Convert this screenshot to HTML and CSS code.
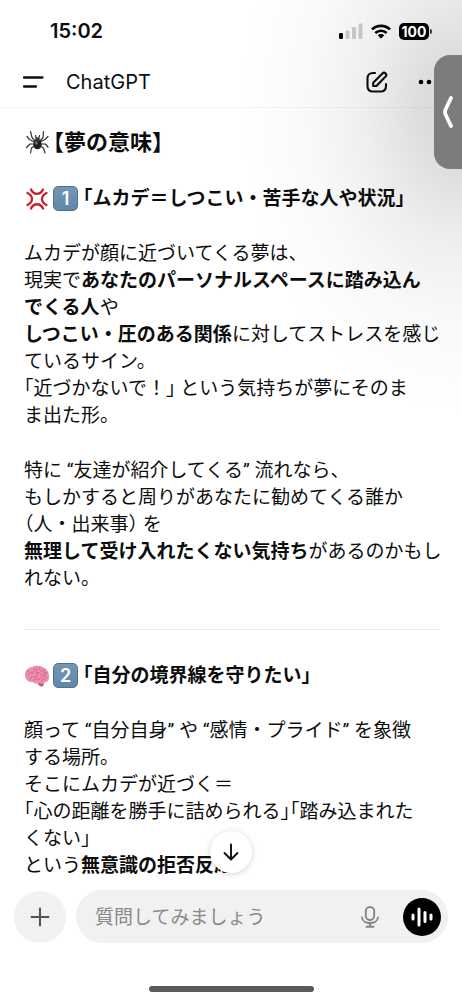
FILE: index.html
```html
<!DOCTYPE html>
<html lang="ja">
<head>
<meta charset="utf-8">
<meta name="viewport" content="width=device-width, initial-scale=1">
<title>ChatGPT</title>
<link rel="stylesheet" href="styles.css">
</head>
<body>
<div class="app">
  <div class="status">
    <time class="clock">15:02</time>
    <div class="indicators">
      <svg class="signal" viewBox="0 0 24 16" aria-hidden="true"><rect x="0" y="10" width="4" height="6" rx="1.2"/><g fill="#c6c6c6"><rect x="6.5" y="7.5" width="4" height="8.500" rx="1.2"/><rect x="13" y="4" width="4" height="12" rx="1.2"/><rect x="19.500" y="0.500" width="4" height="15.500" rx="1.2"/></g></svg>
      <svg class="wifi" viewBox="0 0 20 15" aria-hidden="true"><g fill="none" stroke="#000" stroke-width="2.700"><path d="M1 5.400C6 .6 14 .6 19 5.400"/><path d="M4.300 9C7.600 6 12.400 6 15.700 9"/></g><path d="M6.700 11.300c1.900-1.700 4.700-1.700 6.600 0L10 14.700z"/></svg>
      <div class="battery">100</div>
    </div>
  </div>

  <header class="header">
    <button class="icon-btn" aria-label="メニュー"><svg class="menu-icon" viewBox="0 0 22 14"><path d="M2 2.500h18.500M2 11.500h12" stroke="#0d0d0d" stroke-width="2.300" stroke-linecap="round"/></svg></button>
    <h1 class="title">ChatGPT</h1>
    <button class="icon-btn compose" aria-label="新しいチャット"><svg class="compose-icon" viewBox="0 0 22 22"><g fill="none" stroke="#0d0d0d" stroke-width="2.100" stroke-linecap="round" stroke-linejoin="round"><path d="M9 2H7Q1.500 2 1.500 7.500v7.500Q1.500 20.500 7 20.500h7.500Q20 20.500 20 15v-2"/><path d="M7.200 15v-3.300L16.400 2.400a2.250 2.250 0 0 1 3.200 3.200L10.400 15z"/></g></svg></button>
    <button class="icon-btn" aria-label="その他"><svg class="more-icon" viewBox="0 0 22 6"><circle cx="3" cy="3" r="2.300"/><circle cx="11" cy="3" r="2.300"/><circle cx="19" cy="3" r="2.300"/></svg></button>
  </header>

  <button class="side-tab" aria-label="開く"><svg class="chevron" viewBox="0 0 12 34"><path d="M9 3 3.500 14.500q-1 2.500 0 5L9 31" fill="none" stroke="#fff" stroke-width="3.800" stroke-linecap="round" stroke-linejoin="round"/></svg></button>

  <main class="chat">
    <h2 class="heading-large">
      <svg class="emoji" viewBox="0 0 26 26" role="img" aria-label="クモ"><g fill="none" stroke="#333" stroke-width="1.200" stroke-linecap="round" stroke-linejoin="round"><path d="M11 12 8 8.500 6.500 2.500M10.500 13 5.500 10.500 3 7.500M10.500 15 6 15 2.500 18.500M11 16.500 7.500 19 6.500 24M16 12l3-3.500L19.500 2.500M16 13l5-2.500L24 7.500M16.500 15l5 0 2.500 3M16 17l3.500 2 1.500 5M12.500 10l-1-3.500M14.500 10l1-3.500"/></g><ellipse cx="13.500" cy="15.500" rx="4.200" ry="4.800" fill="#1f1f1f"/><circle cx="13.500" cy="10.500" r="2.300" fill="#333"/><ellipse cx="12.300" cy="14" rx="1.200" ry="1.700" fill="#777"/></svg>
      <span><span class="half">【</span>夢の意味<span class="half">】</span></span>
    </h2>

    <h3 class="heading">
      <svg class="emoji" viewBox="0 0 26 26" role="img" aria-label="怒り"><g fill="none" stroke="#c9202d" stroke-width="2.300" stroke-linecap="round" stroke-linejoin="round"><path d="M7 3.500C9.500 9.200 16.500 9.200 19 3.500M7 22.500C9.500 16.800 16.500 16.800 19 22.500"/><path d="M3.500 7C9.500 10 9.500 16 3.500 19M22.500 7C16.500 10 16.500 16 22.500 19"/></g></svg>
      <span class="keycap">1</span>
      <span><span class="half">「</span>ムカデ＝しつこい・苦手な人や状況<span class="half">」</span></span>
    </h3>

    <p class="text">ムカデが顔に近づいてくる夢は、<br>現実で<strong>あなたのパーソナルスペースに踏み込ん<br>でくる人</strong>や<br><strong>しつこい・圧のある関係</strong>に対してストレスを感じ<br>ているサイン。<br><span class="half">「</span>近づかないで！<span class="half">」</span> という気持ちが夢にそのま<br>ま出た形。</p>

    <p class="text">特に “友達が紹介してくる” 流れなら、<br>もしかすると周りがあなたに勧めてくる誰か<br><span class="half">（</span>人・出来事<span class="half">）</span> を<br><strong>無理して受け入れたくない気持ち</strong>があるのかもし<br>れない。</p>

    <hr class="rule">

    <h3 class="heading">
      <svg class="emoji" viewBox="0 0 26 26" role="img" aria-label="脳"><path d="M13.500 19c0 3 3 5 5 4.500 1.500-.5 1.500-3 1-5z" fill="#c85f83"/><path d="M1 13C.5 8 4 4.500 8 4c4-2 9-1.500 12 1 3 1 5 4.500 5 8 .5 3-1 6-4 6.500-2 1-4 1.500-6 .5-2 1-5 .5-6-1C4.500 19.500 1.500 17 1 13z" fill="#f08fac"/><g fill="none" stroke="#cc6187" stroke-width=".8" stroke-linecap="round"><path d="M4 12q1-3 4-2t2-4M6 16q0-3 4-2t3-4-1-5M16 4q-2 3 1 4t4-2M13 10q3-1 4 1t5 0M9 18q1-3 4-2t5-2 5 1M17 18q1-2 4-2M3 9q2 0 2-2M19 9q2 0 4 1"/></g></svg>
      <span class="keycap">2</span>
      <span><span class="half">「</span>自分の境界線を守りたい<span class="half">」</span></span>
    </h3>

    <p class="text">顔って “自分自身” や “感情・プライド” を象徴<br>する場所。<br>そこにムカデが近づく＝<br><span class="half">「</span>心の距離を勝手に詰められる<span class="half">」</span><span class="half">「</span>踏み込まれた<br>くない<span class="half">」</span><br>という<strong>無意識の拒否反応</strong></p>
  </main>

  <footer class="footer">
    <button class="scroll-down" aria-label="一番下へ"><svg class="down-icon" viewBox="0 0 18 18"><path d="M9 1.500v15M2.500 10 9 16.500 15.500 10" fill="none" stroke="#0d0d0d" stroke-width="1.900" stroke-linecap="round" stroke-linejoin="round"/></svg></button>
    <button class="add" aria-label="追加"><svg class="plus-icon" viewBox="0 0 20 20"><path d="M10 1.500v17M1.500 10h17" stroke="#555" stroke-width="2.100" stroke-linecap="round"/></svg></button>
    <div class="composer">
      <input class="prompt" type="text" placeholder="質問してみましょう" aria-label="質問">
      <button class="icon-btn" aria-label="音声入力"><svg class="mic-icon" viewBox="0 0 18 22"><g fill="none" stroke="#858585" stroke-width="1.900" stroke-linecap="round"><rect x="4.800" y="1" width="8.400" height="13" rx="4.200"/><path d="M1 11.500c.8 7.300 15.200 7.300 16 0M9 17v3.500M5.500 20.700h7"/></g></svg></button>
      <button class="voice" aria-label="音声モード"><svg class="wave-icon" viewBox="0 0 22 20"><path d="M2 8v4M8 2v16M14 5.500v9M20 8v4" stroke="#fff" stroke-width="3" stroke-linecap="round"/></svg></button>
    </div>
  </footer>
  <div class="home-bar"></div>
</div>
</body>
</html>
```
FILE: styles.css
```css
* { box-sizing: border-box; }

body {
  margin: 0;
  background: #fff;
  color: #0d0d0d;
  font-family: Inter, "Noto Sans CJK JP", sans-serif;
}

button {
  display: flex;
  align-items: center;
  justify-content: center;
  padding: 0;
  border: 0;
  background: none;
}

svg { display: block; flex: none; }

h1, h2, h3, p { margin: 0; }

.app {
  position: relative;
  display: flex;
  flex-direction: column;
  height: 100vh;
  overflow: hidden;
  background: radial-gradient(220px 300px at 100% 110px, #d4d4d4 0%, #dedede 20%, #efefef 45%, #f9f9f9 70%, #fff 100%);
}

.status {
  display: flex;
  align-items: center;
  justify-content: space-between;
  height: 60px;
  flex: none;
  padding: 2px 33px 0 50px;
}

.clock { font-size: 20px; font-weight: 600; }

.indicators { display: flex; align-items: center; gap: 8px; }

.signal { width: 24px; height: 16px; }
.wifi { width: 20px; height: 15px; }

.battery {
  position: relative;
  width: 30px;
  height: 17px;
  border-radius: 5px;
  background: #000;
  color: #fff;
  font-size: 14px;
  font-weight: 700;
  line-height: 17px;
  text-align: center;
}

.battery::after {
  content: "";
  position: absolute;
  top: 6px;
  right: -3px;
  width: 2px;
  height: 5px;
  border-radius: 0 2px 2px 0;
  background: #333;
}

.header {
  display: flex;
  align-items: center;
  flex: none;
  height: 48px;
  padding: 0 22px 3px;
  border-bottom: 1px solid rgba(0, 0, 0, 0.04);
}

.menu-icon { width: 22px; height: 14px; }
.title { margin-left: 22px; font-size: 20px; font-weight: 400; line-height: 28px; }
.compose { margin-left: auto; margin-right: 30px; }
.compose-icon { width: 22px; height: 22px; }
.more-icon { width: 22px; height: 6px; }

.side-tab {
  position: absolute;
  top: 55px;
  right: 0;
  width: 28px;
  height: 114px;
  border-radius: 16px 0 0 16px;
  background: #7c7c7c;
}

.chevron { width: 12px; height: 34px; }

.chat {
  flex: 1;
  min-height: 0;
  overflow: hidden;
  padding: 18px 22px 0 24px;
  white-space: nowrap;
}

.heading-large, .heading {
  display: flex;
  align-items: center;
  font-weight: 700;
}

.heading-large { gap: 3px; font-size: 22px; line-height: 32px; }
.heading { gap: 3px; margin: 27px 0 28px; font-size: 19px; line-height: 27px; }

.emoji { width: 26px; height: 26px; }

.keycap {
  width: 25px;
  height: 25px;
  margin-right: 2px;
  border: 1px solid #53718c;
  border-radius: 5px;
  background: linear-gradient(#7597b3, #5e87aa);
  color: #fff;
  font-size: 18px;
  font-weight: 600;
  line-height: 23px;
  text-align: center;
}

.text {
  margin-bottom: 28px;
  font-family: Roboto, "Noto Sans CJK JP", sans-serif;
  font-size: 19px;
  line-height: 27px;
}

.text strong { font-weight: 700; }

.half { font-feature-settings: "halt"; }

.rule {
  height: 1px;
  margin: 37px 0 32px;
  border: 0;
  background: #ececec;
}

.footer {
  position: relative;
  display: flex;
  align-items: center;
  gap: 10px;
  flex: none;
  padding: 14px 14px 0;
}

.scroll-down {
  position: absolute;
  top: -45px;
  left: 50%;
  width: 42px;
  height: 42px;
  margin-left: -21px;
  border-radius: 50%;
  background: #fff;
  box-shadow: 0 1px 6px rgba(0, 0, 0, 0.18);
}

.down-icon { width: 18px; height: 18px; }

.add {
  width: 52px;
  height: 52px;
  flex: none;
  border-radius: 50%;
  background: #f1f1f1;
}

.plus-icon { width: 20px; height: 20px; }

.composer {
  display: flex;
  align-items: center;
  flex: 1;
  min-width: 0;
  height: 53px;
  padding: 0 7px 0 19px;
  border-radius: 27px;
  background: #f1f1f1;
}

.prompt {
  flex: 1;
  min-width: 0;
  padding: 2px 0 0;
  border: 0;
  outline: 0;
  background: none;
  font-family: inherit;
  font-size: 19px;
  color: #0d0d0d;
}

.prompt::placeholder { color: #8a8a8a; opacity: 1; }

.mic-icon { width: 18px; height: 22px; }

.voice {
  width: 38px;
  height: 38px;
  margin-left: 24px;
  border-radius: 50%;
  background: #000;
}

.wave-icon { width: 22px; height: 20px; }

.home-bar {
  flex: none;
  width: 165px;
  height: 6px;
  margin: 43px auto 8px;
  border-radius: 3px;
  background: #5a5a5a;
}
```
